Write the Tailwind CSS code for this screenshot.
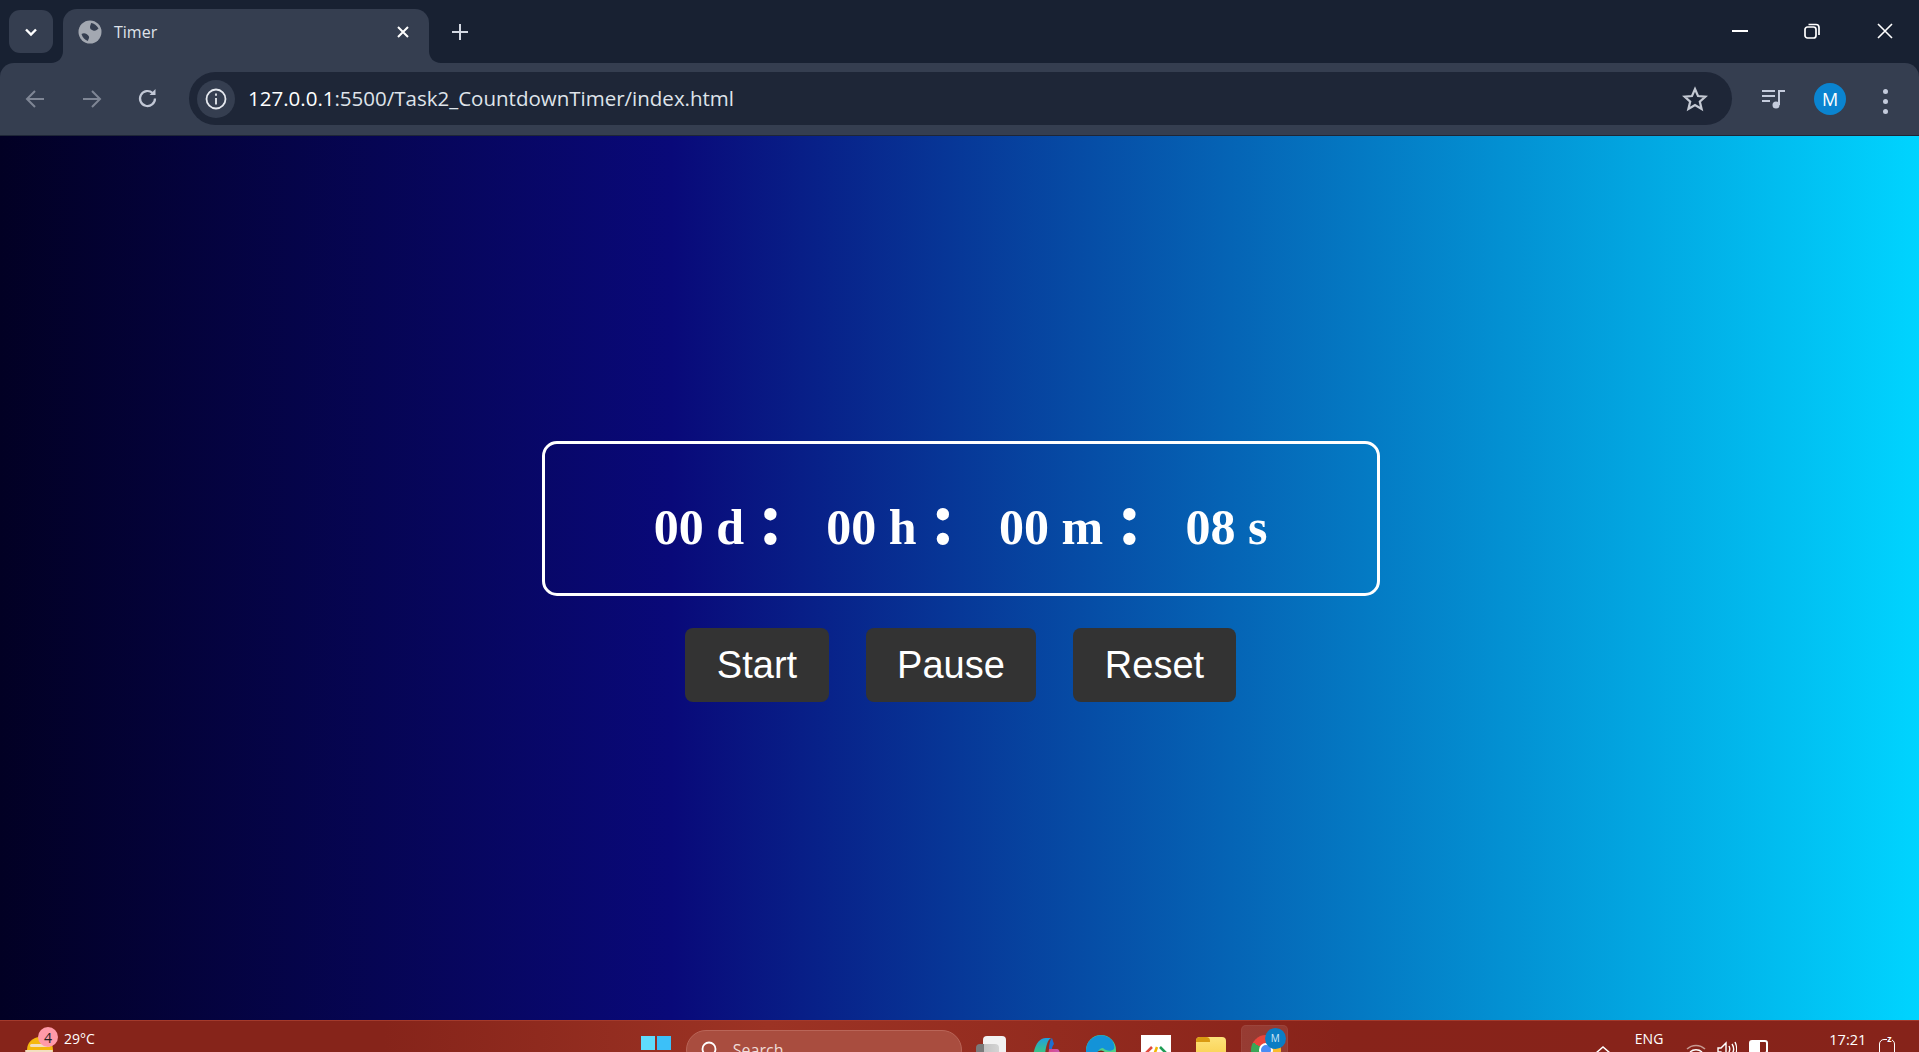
<!DOCTYPE html>
<html lang="en">
<head>
  <meta charset="UTF-8">
  <title>Timer</title>
  <script src="https://cdn.jsdelivr.net/npm/@tailwindcss/browser@4"></script>
</head>
<body class="h-[1052px] w-[1919px] overflow-hidden flex flex-col font-['Open_Sans',sans-serif] bg-[#182132]">
  <!-- Tab strip -->
  <div class="h-[63px] shrink-0 flex bg-[#182132] text-white">
    <div class="mt-[10px] ml-[9px] w-[44px] h-[43px] rounded-[11px] bg-[#353e50] flex items-center justify-center">
      <svg class="w-[16px] h-[16px]" viewBox="0 0 16 16" fill="none" stroke="#fff" stroke-width="2.4"><path d="M3 5.500l5 5 5-5"/></svg>
    </div>
    <div class="relative mt-[9px] ml-[10px] w-[366px] h-[54px] rounded-t-[14px] bg-[#353e50] flex items-center pl-[15px] pr-[19px] pb-[8px]">
      <svg class="absolute -left-[12px] bottom-0 w-[12px] h-[12px]" viewBox="0 0 12 12"><path d="M12 0v12H0C7 12 12 7 12 0z" fill="#353e50"/></svg>
      <svg class="absolute -right-[12px] bottom-0 w-[12px] h-[12px]" viewBox="0 0 12 12"><path d="M0 0v12h12C5 12 0 7 0 0z" fill="#353e50"/></svg>
      <svg class="w-[24px] h-[24px]" viewBox="0 0 24 24"><circle cx="12" cy="12" r="11.500" fill="#a3a8b1"/><path d="M13 3c3 .3 6 2.500 7.500 5.500-1.500 1.500-3 3-5.500 2-2-1-3-1.500-3-3.500 0-1.500 1-2.500 1-4zM3.500 14c1.500-1 3.500-1 5 0 2 1.200 3 2.500 2.500 4-.3 1-1 2-1 3-3-.7-5.500-3.500-6.500-7z" fill="#353e50"/></svg>
      <span class="ml-[12px] text-[16px] text-[#dfe3ea]">Timer</span>
      <svg class="ml-auto w-[14px] h-[14px]" viewBox="0 0 14 14" stroke="#fff" stroke-width="2"><path d="M2 2l10 10M12 2L2 12"/></svg>
    </div>
    <svg class="mt-[23px] ml-[22px] w-[18px] h-[18px]" viewBox="0 0 18 18" stroke="#d3d8e2" stroke-width="2"><path d="M9 1v16M1 9h16"/></svg>
    <div class="ml-auto flex items-start">
      <svg class="mt-[24px] w-[16px] h-[14px]" viewBox="0 0 16 14" stroke="#fff" stroke-width="2"><path d="M0 7h16"/></svg>
      <svg class="mt-[23px] ml-[56px] w-[16px] h-[16px]" viewBox="0 0 16 16" fill="none" stroke="#fff" stroke-width="1.700"><rect x="1" y="4" width="11" height="11" rx="2.500"/><path d="M4.500 1.500h7.500a3 3 0 0 1 3 3v7.500"/></svg>
      <svg class="mt-[23px] ml-[57px] mr-[26px] w-[16px] h-[16px]" viewBox="0 0 16 16" stroke="#fff" stroke-width="1.600"><path d="M1 1l14 14M15 1L1 15"/></svg>
    </div>
  </div>

  <!-- Toolbar -->
  <div class="h-[73px] shrink-0 bg-[#353e50] border-b border-[#1e2637] rounded-t-[14px] flex items-start">
    <svg class="mt-[26px] ml-[25px] w-[20px] h-[20px]" viewBox="0 0 20 20" fill="none" stroke="#7f8695" stroke-width="2"><path d="M19 10H2M10 2l-8 8 8 8"/></svg>
    <svg class="mt-[26px] ml-[37px] w-[20px] h-[20px]" viewBox="0 0 20 20" fill="none" stroke="#7f8695" stroke-width="2"><path d="M1 10h17M10 2l8 8-8 8"/></svg>
    <svg class="mt-[25px] ml-[35px] w-[21px] h-[21px]" viewBox="0 0 21 21" fill="none" stroke="#c2c8d6" stroke-width="2.200"><path d="M18 10.500a7.500 7.500 0 1 1-2.400-5.500"/><path d="M18.500 1v6h-6z" fill="#c2c8d6" stroke="none"/></svg>
    <div class="mt-[9px] ml-[31px] w-[1543px] h-[53px] rounded-full bg-[#1e2637] flex items-center pl-[8px] pr-[24px]">
      <div class="w-[38px] h-[38px] rounded-full bg-[#353e50] flex items-center justify-center">
        <svg class="w-[22px] h-[22px]" viewBox="0 0 22 22" fill="none" stroke="#e6e9ef" stroke-width="1.800"><circle cx="11" cy="11" r="9.500"/><path d="M11 10v6.500M11 5.500v2.200"/></svg>
      </div>
      <span class="ml-[13px] text-[20.500px] text-[#dfe3ea]"><span class="text-white">127.0.0.1</span>:5500/Task2_CountdownTimer/index.html</span>
      <svg class="ml-auto w-[26px] h-[26px]" viewBox="0 0 26 26" fill="none" stroke="#c4c9d3" stroke-width="2.200"><path d="M13 3l3 7 7.500.6-5.700 5 1.800 7.400L13 19l-6.600 4 1.800-7.400-5.700-5L10 10z"/></svg>
    </div>
    <svg class="mt-[26px] ml-[30px] w-[24px] h-[20px]" viewBox="0 0 24 20" fill="none" stroke="#c4cbdc" stroke-width="2"><path d="M0 2h13M0 7h13M0 12h8"/><path d="M17 16V2h6"/><circle cx="14" cy="16" r="3.500" fill="#c4cbdc" stroke="none"/></svg>
    <div class="mt-[20px] ml-[28px] w-[32px] h-[32px] rounded-full bg-[#0a84d0] flex items-center justify-center text-[18px] text-white">M</div>
    <div class="mt-[26px] ml-[37px] flex flex-col gap-[5px]">
      <div class="w-[5px] h-[5px] rounded-full bg-[#c4cbdc]"></div>
      <div class="w-[5px] h-[5px] rounded-full bg-[#c4cbdc]"></div>
      <div class="w-[5px] h-[5px] rounded-full bg-[#c4cbdc]"></div>
    </div>
  </div>

  <!-- Timer page -->
  <main class="h-[884px] shrink-0 flex flex-col items-center justify-center pl-[2px] pb-[13px] bg-[linear-gradient(90deg,#020024_0%,#090979_35%,#00d4ff_100%)]">
    <div class="w-[838px] h-[155px] border-[3px] border-white rounded-[15px] flex items-baseline justify-center pt-[36px] font-['Liberation_Serif',serif] font-bold text-[50px] text-white">
      <span>00 d</span><span class="ml-[14px] mr-[43px] text-[76px] leading-none">:</span>
      <span>00 h</span><span class="ml-[14px] mr-[43px] text-[76px] leading-none">:</span>
      <span>00 m</span><span class="ml-[14px] mr-[43px] text-[76px] leading-none">:</span>
      <span>08 s</span>
    </div>
    <div class="mt-[32px] flex gap-[37px] font-['Liberation_Sans',sans-serif] text-[38px] text-white">
      <button class="h-[74px] px-[31.500px] rounded-[8px] bg-[#333]">Start</button>
      <button class="h-[74px] px-[31.500px] rounded-[8px] bg-[#333]">Pause</button>
      <button class="h-[74px] px-[31.500px] rounded-[8px] bg-[#333]">Reset</button>
    </div>
  </main>

  <!-- Taskbar, cut off by the bottom of the window -->
  <footer class="h-[32px] shrink-0 overflow-hidden border-t border-[#a33a2c] flex items-start text-white bg-[linear-gradient(90deg,#86241a_0%,#86241a_20%,#9c3324_40%,#932b1f_55%,#88231a_70%,#86231a_100%)]">
    <div class="relative mt-[16px] ml-[27px] w-[26px] h-[30px]">
      <div class="w-[26px] h-[26px] rounded-full bg-[#f5b80f]"></div>
      <div class="absolute top-[7px] left-[3px] w-[20px] h-[3px] rounded-sm bg-[#f3dfc0]"></div>
      <div class="absolute top-[13px] -left-[2px] w-[28px] h-[2px] rounded-sm bg-[#f3dfc0]"></div>
      <div class="absolute -top-[10px] left-[11px] w-[20px] h-[20px] rounded-full bg-[#ff9aa8] flex items-center justify-center text-[14px] text-[#222]">4</div>
    </div>
    <span class="mt-[8px] ml-[11px] text-[14px] leading-[20px]">29°C</span>

    <svg class="mt-[15px] ml-[546px] w-[30px] h-[30px]" viewBox="0 0 30 30"><path d="M0 0h14v14H0z" fill="#5fdcfc"/><path d="M16 0h14v14H16z" fill="#3cc0f8"/><path d="M0 16h30v14H0z" fill="#2fa9ee"/></svg>
    <div class="mt-[9px] ml-[15px] w-[276px] h-[40px] rounded-full bg-[#a94d3f] border border-[#b96558] flex items-start pl-[14px]">
      <svg class="mt-[10px] w-[18px] h-[18px]" viewBox="0 0 18 18" fill="none" stroke="#fff" stroke-width="1.800"><circle cx="8" cy="8" r="6.500"/><path d="M13 13l4 4"/></svg>
      <span class="ml-[14px] mt-[7px] text-[16px] text-[#f0dcd8]">Search</span>
    </div>
    <div class="relative mt-[15px] ml-[14px] w-[30px] h-[30px]">
      <div class="absolute left-[7px] top-0 w-[23px] h-[30px] rounded-sm bg-[#f2f2f2]"></div>
      <div class="absolute left-0 top-[8px] w-[23px] h-[22px] rounded-sm bg-[linear-gradient(90deg,#7a7a7a_0%,#7a7a7a_35%,#c4c4c4_36%,#d4d4d4_100%)]"></div>
    </div>
    <svg class="mt-[16px] ml-[26px] w-[28px] h-[28px]" viewBox="0 0 28 28">
      <defs>
        <linearGradient id="copilotLeft" x1="0" y1="0" x2="0" y2="1"><stop offset="0" stop-color="#1f9fe0"/><stop offset=".5" stop-color="#39c28a"/><stop offset="1" stop-color="#f2c83a"/></linearGradient>
        <linearGradient id="copilotRight" x1="0" y1="0" x2="1" y2="1"><stop offset="0" stop-color="#e2447a"/><stop offset="1" stop-color="#b06be0"/></linearGradient>
      </defs>
      <path d="M0 28C1 12 5 1 14 1h6c-5 0-7 12-8 27z" fill="url(#copilotLeft)"/>
      <path d="M17 12c0-5 1-9 3-11l2 6c-1 1-2 3-2 5z" fill="#1f6fd0"/>
      <path d="M17 12h8c2 0 3 3 3 6v10H15z" fill="url(#copilotRight)"/>
    </svg>
    <svg class="mt-[14px] ml-[26px] w-[30px] h-[30px]" viewBox="0 0 30 30"><circle cx="15" cy="15" r="15" fill="#4fd08a"/><path d="M0 15A15 15 0 0 1 26 5c2 3 3 7 2 9-3 3-8 2-11-1-3 0-6 3-6 8H0z" fill="#1393d8"/><circle cx="15" cy="21" r="5.500" fill="#7a2018"/></svg>
    <div class="mt-[14px] ml-[25px] w-[30px] h-[30px] bg-white flex justify-center pt-[11px]">
      <svg class="w-[22px] h-[12px]" viewBox="0 0 22 12" fill="none" stroke-width="2.600"><path d="M7 1L2 6l4 4" stroke="#e0483b"/><path d="M15 1l5 5-4 4" stroke="#1f9d55"/><path d="M12 1l-3 8" stroke="#f2b705"/></svg>
    </div>
    <div class="relative mt-[16px] ml-[25px] w-[30px] h-[26px] rounded-sm bg-[linear-gradient(180deg,#fde27a,#f9cc45)]">
      <div class="absolute left-0 top-0 w-[14px] h-[5px] rounded-t-sm bg-[#d99a12]"></div>
    </div>
    <div class="relative mt-[4px] ml-[15px] w-[47px] h-[40px] rounded-[5px] bg-white/10 border border-white/5">
      <div class="absolute left-[9px] top-[9px] w-[30px] h-[30px] rounded-full bg-[conic-gradient(#e8453c_0deg_60deg,#f9bb2d_60deg_180deg,#3aa757_180deg_300deg,#e8453c_300deg_360deg)]"></div>
      <div class="absolute left-[17px] top-[17px] w-[14px] h-[14px] rounded-full bg-[#4a8cf5] border-2 border-white"></div>
      <div class="absolute left-[23px] top-[2px] w-[21px] h-[21px] rounded-full bg-[#0a7dc4] flex items-center justify-center text-[10px] text-[#cfe6f5]">M</div>
    </div>

    <svg class="mt-[24px] ml-[307px] w-[16px] h-[10px]" viewBox="0 0 16 10" fill="none" stroke="#fff" stroke-width="1.500"><path d="M1 8l7-6 7 6"/></svg>
    <span class="mt-[8px] ml-[24px] text-[14px] leading-[20px]">ENG</span>
    <svg class="mt-[22px] ml-[23px] w-[20px] h-[14px]" viewBox="0 0 20 14" fill="none" stroke="#fff" stroke-width="1.500"><path d="M1 6a13 13 0 0 1 18 0" stroke="#c79a92"/><path d="M4 9a9 9 0 0 1 12 0M7 12a4 4 0 0 1 6 0"/></svg>
    <svg class="mt-[20px] ml-[11px] w-[20px] h-[16px]" viewBox="0 0 20 16" fill="none" stroke="#fff" stroke-width="1.400"><path d="M1 7h3l5-5v14l-5-5H1z"/><path d="M12 5c1 2 1 4 0 6M15 3c2 3 2 7 0 10M18 1c2 4 2 10 0 14"/></svg>
    <div class="mt-[19px] ml-[12px] w-[19px] h-[14px] rounded-[3px] border-2 border-white">
      <div class="w-[9px] h-full bg-white"></div>
    </div>
    <span class="mt-[9px] ml-[61px] text-[14.500px] leading-[20px]">17:21</span>
    <div class="relative mt-[18px] ml-[13px] w-[16px] h-[20px] rounded-[5px] border-[1.500px] border-white">
      <span class="absolute -top-[7px] left-[7px] text-[9px] font-bold bg-[#86231a] leading-[12px]">z</span>
    </div>
  </footer>
</body>
</html>
